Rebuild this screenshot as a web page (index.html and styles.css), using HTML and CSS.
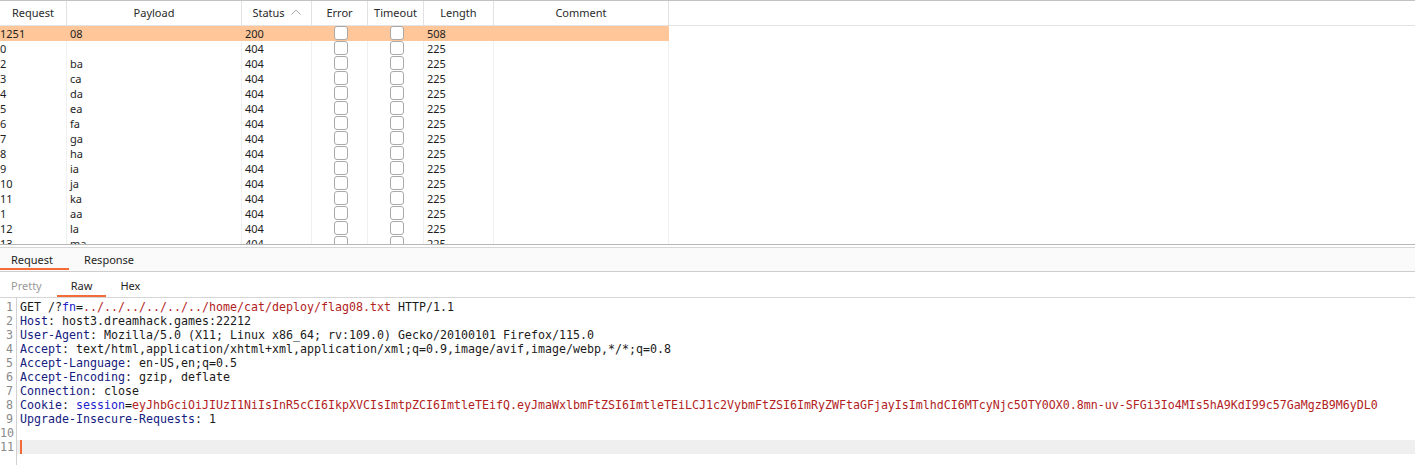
FILE: index.html
```html
<!DOCTYPE html>
<html>
<head>
<meta charset="utf-8">
<link rel="stylesheet" href="styles.css">
</head>
<body>
<div class="app">
  <div class="grid">
    <div class="thead">
      <div class="th c-req">Request</div>
      <div class="th c-pay">Payload</div>
      <div class="th c-st"><span>Status</span><svg class="sort" width="10" height="6" viewBox="0 0 10 6"><polyline points="0.5,5.5 5,1 9.5,5.5" fill="none" stroke="#a9a9a9" stroke-width="1"/></svg></div>
      <div class="th c-err">Error</div>
      <div class="th c-to">Timeout</div>
      <div class="th c-len">Length</div>
      <div class="th c-com">Comment</div>
    </div>
    <div class="tbody">
      <div class="tr sel"><div class="td c-req">1251</div><div class="td c-pay">08</div><div class="td c-st">200</div><div class="td c-err"><i class="cb"></i></div><div class="td c-to"><i class="cb"></i></div><div class="td c-len">508</div><div class="td c-com"></div></div>
      <div class="tr"><div class="td c-req">0</div><div class="td c-pay"></div><div class="td c-st">404</div><div class="td c-err"><i class="cb"></i></div><div class="td c-to"><i class="cb"></i></div><div class="td c-len">225</div><div class="td c-com"></div></div>
      <div class="tr"><div class="td c-req">2</div><div class="td c-pay">ba</div><div class="td c-st">404</div><div class="td c-err"><i class="cb"></i></div><div class="td c-to"><i class="cb"></i></div><div class="td c-len">225</div><div class="td c-com"></div></div>
      <div class="tr"><div class="td c-req">3</div><div class="td c-pay">ca</div><div class="td c-st">404</div><div class="td c-err"><i class="cb"></i></div><div class="td c-to"><i class="cb"></i></div><div class="td c-len">225</div><div class="td c-com"></div></div>
      <div class="tr"><div class="td c-req">4</div><div class="td c-pay">da</div><div class="td c-st">404</div><div class="td c-err"><i class="cb"></i></div><div class="td c-to"><i class="cb"></i></div><div class="td c-len">225</div><div class="td c-com"></div></div>
      <div class="tr"><div class="td c-req">5</div><div class="td c-pay">ea</div><div class="td c-st">404</div><div class="td c-err"><i class="cb"></i></div><div class="td c-to"><i class="cb"></i></div><div class="td c-len">225</div><div class="td c-com"></div></div>
      <div class="tr"><div class="td c-req">6</div><div class="td c-pay">fa</div><div class="td c-st">404</div><div class="td c-err"><i class="cb"></i></div><div class="td c-to"><i class="cb"></i></div><div class="td c-len">225</div><div class="td c-com"></div></div>
      <div class="tr"><div class="td c-req">7</div><div class="td c-pay">ga</div><div class="td c-st">404</div><div class="td c-err"><i class="cb"></i></div><div class="td c-to"><i class="cb"></i></div><div class="td c-len">225</div><div class="td c-com"></div></div>
      <div class="tr"><div class="td c-req">8</div><div class="td c-pay">ha</div><div class="td c-st">404</div><div class="td c-err"><i class="cb"></i></div><div class="td c-to"><i class="cb"></i></div><div class="td c-len">225</div><div class="td c-com"></div></div>
      <div class="tr"><div class="td c-req">9</div><div class="td c-pay">ia</div><div class="td c-st">404</div><div class="td c-err"><i class="cb"></i></div><div class="td c-to"><i class="cb"></i></div><div class="td c-len">225</div><div class="td c-com"></div></div>
      <div class="tr"><div class="td c-req">10</div><div class="td c-pay">ja</div><div class="td c-st">404</div><div class="td c-err"><i class="cb"></i></div><div class="td c-to"><i class="cb"></i></div><div class="td c-len">225</div><div class="td c-com"></div></div>
      <div class="tr"><div class="td c-req">11</div><div class="td c-pay">ka</div><div class="td c-st">404</div><div class="td c-err"><i class="cb"></i></div><div class="td c-to"><i class="cb"></i></div><div class="td c-len">225</div><div class="td c-com"></div></div>
      <div class="tr"><div class="td c-req">1</div><div class="td c-pay">aa</div><div class="td c-st">404</div><div class="td c-err"><i class="cb"></i></div><div class="td c-to"><i class="cb"></i></div><div class="td c-len">225</div><div class="td c-com"></div></div>
      <div class="tr"><div class="td c-req">12</div><div class="td c-pay">la</div><div class="td c-st">404</div><div class="td c-err"><i class="cb"></i></div><div class="td c-to"><i class="cb"></i></div><div class="td c-len">225</div><div class="td c-com"></div></div>
      <div class="tr"><div class="td c-req">13</div><div class="td c-pay">ma</div><div class="td c-st">404</div><div class="td c-err"><i class="cb"></i></div><div class="td c-to"><i class="cb"></i></div><div class="td c-len">225</div><div class="td c-com"></div></div>
    </div>
  </div>
  <div class="split"></div>
  <div class="tabs">
    <div class="tab active">Request</div>
    <div class="tab">Response</div>
  </div>
  <div class="subtabs">
    <div class="stab dim">Pretty</div>
    <div class="stab active">Raw</div>
    <div class="stab">Hex</div>
  </div>
  <div class="editor">
    <div class="gutter">
      <div>1</div><div>2</div><div>3</div><div>4</div><div>5</div><div>6</div><div>7</div><div>8</div><div>9</div><div>10</div><div>11</div>
    </div>
    <div class="code">
      <div class="ln">GET /?<span class="pn">fn</span>=<span class="pv">../../../../../../home/cat/deploy/flag08.txt</span> HTTP/1.1</div>
      <div class="ln"><span class="hn">Host</span>: host3.dreamhack.games:22212</div>
      <div class="ln"><span class="hn">User-Agent</span>: Mozilla/5.0 (X11; Linux x86_64; rv:109.0) Gecko/20100101 Firefox/115.0</div>
      <div class="ln"><span class="hn">Accept</span>: text/html,application/xhtml+xml,application/xml;q=0.9,image/avif,image/webp,*/*;q=0.8</div>
      <div class="ln"><span class="hn">Accept-Language</span>: en-US,en;q=0.5</div>
      <div class="ln"><span class="hn">Accept-Encoding</span>: gzip, deflate</div>
      <div class="ln"><span class="hn">Connection</span>: close</div>
      <div class="ln"><span class="hn">Cookie</span>: <span class="pn">session</span>=<span class="pv">eyJhbGciOiJIUzI1NiIsInR5cCI6IkpXVCIsImtpZCI6ImtleTEifQ.eyJmaWxlbmFtZSI6ImtleTEiLCJ1c2VybmFtZSI6ImRyZWFtaGFjayIsImlhdCI6MTcyNjc5OTY0OX0.8mn-uv-SFGi3Io4MIs5hA9KdI99c57GaMgzB9M6yDL0</span></div>
      <div class="ln"><span class="hn">Upgrade-Insecure-Requests</span>: 1</div>
      <div class="ln"> </div>
      <div class="ln cur"><i class="caret"></i></div>
    </div>
  </div>
</div>
</body>
</html>
```
FILE: styles.css
```css
* { box-sizing: border-box; }
html, body { margin: 0; padding: 0; background: #fff; }
body {
  width: 1415px;
  height: 465px;
  overflow: hidden;
  font-family: "Noto Sans", "Open Sans", sans-serif;
  font-size: 11px;
  color: #1e1e1e;
}
.app { display: flex; flex-direction: column; height: 465px; }

.grid { display: flex; flex-direction: column; }
.thead {
  display: flex;
  height: 26px;
  border-top: 1px solid #c3c3c3;
  border-bottom: 1px solid #e3e3e3;
}
.th {
  display: flex;
  align-items: center;
  justify-content: center;
  padding-bottom: 1px;
  border-right: 1px solid #e2e2e2;
  color: #2a2a2a;
  gap: 6px;
}
.sort { display: block; margin-top: -1px; }
.c-req { width: 67px; }
.c-pay { width: 175px; }
.c-st { width: 70px; }
.c-err { width: 56px; }
.c-to { width: 56px; }
.c-len { width: 70px; }
.c-com { width: 175px; }

.tbody { height: 218px; overflow: hidden; }
.tr { display: flex; height: 15px; }
.td {
  height: 15px;
  line-height: 15px;
  padding-left: 3px;
  border-right: 1px solid #f0f0f0;
  white-space: nowrap;
}
.td.c-req { padding-left: 0; }
.td.c-err, .td.c-to { display: flex; justify-content: center; padding-left: 2px; }
.tr.sel .td { background: #ffc799; border-right-color: #ffc799; }
.cb {
  display: block;
  width: 14px;
  height: 14px;
  border: 1px solid #a9a9a9;
  border-radius: 3px;
  background: #fff;
}

.split {
  height: 4px;
  border-top: 1px solid #b6b6b6;
  border-bottom: 1px solid #d6d6d6;
}

.tabs {
  display: flex;
  height: 24px;
  background: #fafafa;
  border-bottom: 1px solid #cdcdcd;
}
.tab {
  height: 22px;
  line-height: 22px;
  padding: 1px 15px 0;
  color: #1e1e1e;
  border-bottom: 2px solid transparent;
}
.tab:first-child { padding-left: 11px; padding-right: 16px; }
.tab.active { border-bottom-color: #f36b36; }

.subtabs { display: flex; height: 25px; }
.stab {
  height: 25px;
  line-height: 25px;
  padding: 1px 14px 0;
  border-bottom: 2px solid transparent;
  color: #1e1e1e;
}
.stab:first-child { padding-left: 11px; padding-right: 15px; }
.stab.dim { color: #9a9a9a; }
.stab.active { border-bottom-color: #f36b36; }

.editor {
  flex: 1;
  display: flex;
  border-top: 1px solid #d6d6d6;
  padding-top: 2px;
  font-family: "DejaVu Sans Mono", monospace;
  font-size: 11.63px;
  line-height: 14px;
}
.gutter {
  width: 17px;
  border-right: 1px solid #d2d2d2;
  padding-right: 3px;
  text-align: right;
  color: #8a8a8a;
  margin-top: -2px;
  padding-top: 2px;
}
.gutter div { height: 14px; }
.code { flex: 1; color: #1a1a1a; }
.ln { height: 14px; padding-left: 3px; white-space: pre; }
.ln.cur { background: #efefef; display: flex; align-items: stretch; }
.caret { display: block; width: 2px; background: #f26a35; }
.hn { color: #15207f; }
.pn { color: #2222cc; }
.pv { color: #b21d1d; }
```
